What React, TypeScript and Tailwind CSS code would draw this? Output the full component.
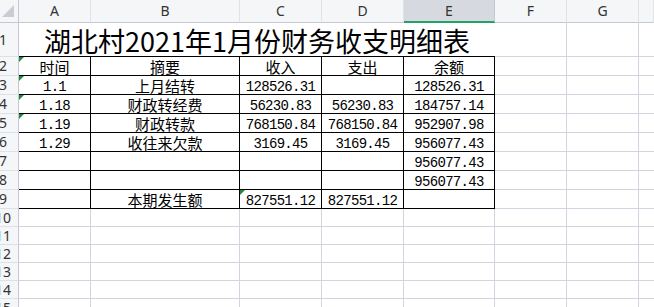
import React from "react";

const cols = ["A", "B", "C", "D", "E", "F", "G", ""];

const rows: string[][] = [
  ["时间", "摘要", "收入", "支出", "余额"],
  ["1.1", "上月结转", "128526.31", "", "128526.31"],
  ["1.18", "财政转经费", "56230.83", "56230.83", "184757.14"],
  ["1.19", "财政转款", "768150.84", "768150.84", "952907.98"],
  ["1.29", "收往来欠款", "3169.45", "3169.45", "956077.43"],
  ["", "", "", "", "956077.43"],
  ["", "", "", "", "956077.43"],
  ["", "本期发生额", "827551.12", "827551.12", ""],
];

// cells with the little green "number stored as text" marker
const flagged = ["2-0", "3-0", "4-0", "5-0", "9-2"];

const isAscii = (s: string) => /^[\x00-\x7f]*$/.test(s);

function RowHead({ n }: { n: number }) {
  return (
    <div className="overflow-hidden border-r border-b border-r-[#c3c8d4] border-b-[#dde0e6] bg-[#f5f6f8]">
      <div className="-ml-[12px] flex h-full w-[30px] items-center justify-center font-['Noto_Sans',sans-serif] text-[14px] leading-none text-[#333]">
        {n}
      </div>
    </div>
  );
}

function Flag() {
  return (
    <svg className="absolute left-0 top-0" width="5" height="5" viewBox="0 0 5 5">
      <polygon points="0,0 5,0 0,5" fill="#1e8a3c" />
    </svg>
  );
}

function Cell({ text, flag, black }: { text: string; flag?: boolean; black: boolean }) {
  return (
    <div
      className={`relative flex items-end justify-center overflow-hidden border-r border-b ${
        black ? "border-black" : "border-[#d0d4de]"
      }`}
    >
      {flag && <Flag />}
      {text &&
        (isAscii(text) ? (
          <span className="translate-y-[1px] pb-[1px] font-['Liberation_Mono',monospace] text-[14px] leading-[14px] tracking-[-0.7px] text-black">
            {text}
          </span>
        ) : (
          <span className="font-['Noto_Sans_CJK_SC',sans-serif] text-[15px] leading-[16px] text-black">
            {text}
          </span>
        ))}
    </div>
  );
}

export default function App() {
  return (
    <div className="h-[307px] w-[654px] overflow-hidden bg-white">
      <div className="grid grid-cols-[19px_72px_149px_82px_82px_91px_72px_72px_1fr] grid-rows-[23px_34px_repeat(8,19px)_repeat(6,18px)]">
        {/* corner */}
        <div className="border-r border-b border-r-[#c3c8d4] border-b-[#c3c8d4] bg-[#f5f6f8]">
          <svg width="18" height="22" viewBox="0 0 18 22">
            <polygon points="2,17 14,17 14,5" fill="#c9ccd2" />
          </svg>
        </div>
        {/* column headers */}
        {cols.map((c, i) =>
          c === "E" ? (
            <div
              key={i}
              className="flex items-center justify-center border-r border-r-[#c3c8d4] border-b-2 border-b-[#21a366] bg-[#d6d9df] pt-[1px] font-['Noto_Sans',sans-serif] text-[14px] leading-none text-[#333]"
            >
              {c}
            </div>
          ) : (
            <div
              key={i}
              className="flex items-center justify-center border-r border-b border-r-[#dfe2e8] border-b-[#c3c8d4] bg-[#f5f6f8] font-['Noto_Sans',sans-serif] text-[14px] leading-none text-[#333]"
            >
              {c}
            </div>
          )
        )}

        {/* row 1: title */}
        <RowHead n={1} />
        <div className="col-span-5 flex items-center justify-center border-b border-black pt-[2px] font-['Noto_Sans_CJK_SC',sans-serif] text-[27px] leading-none text-black">
          湖北村2021年1月份财务收支明细表
        </div>
        <div className="border-r border-b border-[#d0d4de]" />
        <div className="border-r border-b border-[#d0d4de]" />
        <div className="border-b border-[#d0d4de]" />

        {/* rows 2-9 */}
        {rows.map((r, ri) => (
          <React.Fragment key={ri}>
            <RowHead n={ri + 2} />
            {r.map((t, ci) => (
              <Cell key={ci} text={t} black flag={flagged.includes(`${ri + 2}-${ci}`)} />
            ))}
            <Cell text="" black={false} />
            <Cell text="" black={false} />
            <div className="border-b border-[#d0d4de]" />
          </React.Fragment>
        ))}

        {/* rows 10-15 */}
        {[10, 11, 12, 13, 14, 15].map((n) => (
          <React.Fragment key={n}>
            <RowHead n={n} />
            {[0, 1, 2, 3, 4, 5, 6].map((ci) => (
              <Cell key={ci} text="" black={false} />
            ))}
            <div className="border-b border-[#d0d4de]" />
          </React.Fragment>
        ))}
      </div>
    </div>
  );
}
